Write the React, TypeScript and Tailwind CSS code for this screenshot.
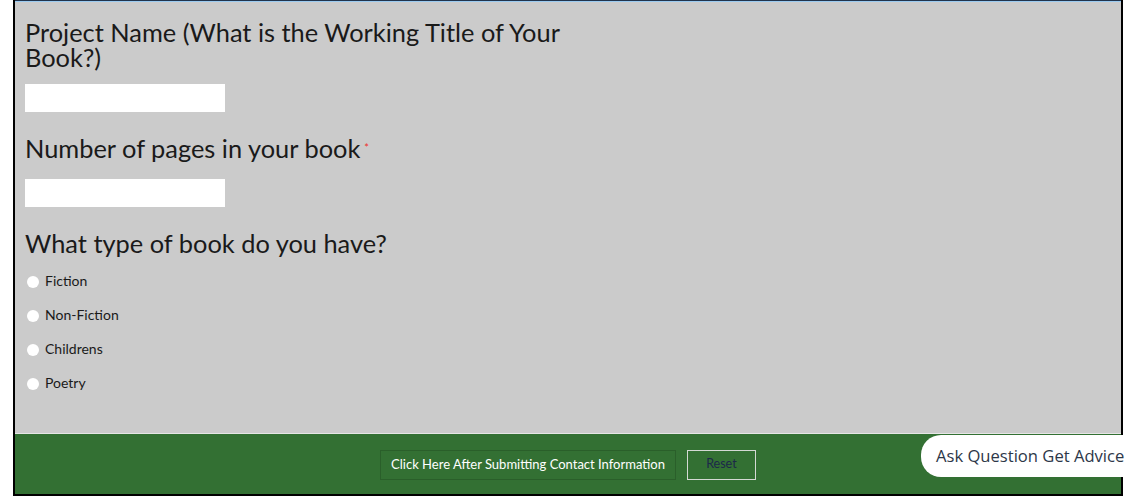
import React from 'react'

const options = ['Fiction', 'Non-Fiction', 'Childrens', 'Poetry']

export default function App() {
  return (
    <div className="relative w-[1130px] h-[503px] bg-white font-['Lato','Liberation_Sans',sans-serif] overflow-hidden">
      <div className="ml-[13px] w-[1110px] border-x-2 border-b-2 border-black">
        {/* top edge */}
        <div className="h-px bg-[#21344d]" />
        <div className="h-px bg-[#9ccbf0]" />

        {/* form body */}
        <div className="bg-[#cbcbcb] pl-[10px] pt-[18px] h-[431px]">
          <h2 className="w-[560px] text-[25.4px] leading-[25px] text-[#1a1a1a]">
            Project Name (What is the Working Title of Your Book?)
          </h2>
          <input className="block mt-[14px] w-[200px] h-[28px] bg-white outline-none" />

          <h2 className="mt-[24px] text-[25.4px] leading-[25px] text-[#1a1a1a] flex items-start">
            Number of pages in your book
            <span className="ml-[4px] mt-[6px] text-[11px] leading-none text-[#f0302a]">*</span>
          </h2>
          <input className="block mt-[18px] w-[200px] h-[28px] bg-white outline-none" />

          <h2 className="mt-[24px] text-[25.4px] leading-[25px] text-[#1a1a1a]">
            What type of book do you have?
          </h2>

          <div className="mt-[14px] flex flex-col gap-[14px]">
            {options.map((o) => (
              <label key={o} className="flex items-center h-[20px] text-[14px] text-[#1a1a1a]">
                <span className="mt-[3px] ml-[2px] mr-[6px] w-[12px] h-[12px] rounded-full bg-white" />
                {o}
              </label>
            ))}
          </div>
        </div>

        {/* footer */}
        <div className="h-px bg-[#e6e6e6]" />
        <div className="h-[60px] bg-[#337033] flex items-center justify-center gap-[11px] pt-[1px]">
          <button className="h-[30px] px-[10px] border border-[#2a5f2a] text-white text-[13px]">
            Click Here After Submitting Contact Information
          </button>
          <button className="h-[30px] w-[69px] border border-[#d4d9d4] text-[#1c284a] text-[12.5px]">
            Reset
          </button>
        </div>
      </div>

      <div className="absolute left-[921px] top-[435px] w-[220px] h-[42px] bg-white rounded-l-[20px] flex items-center pl-[15px] text-[16.6px] text-[#2d3748] font-['Open_Sans','Liberation_Sans',sans-serif]">
        Ask Question Get Advice
      </div>
    </div>
  )
}
